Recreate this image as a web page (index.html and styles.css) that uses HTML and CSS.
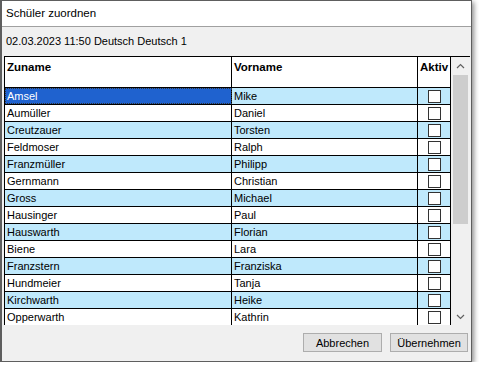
FILE: index.html
```html
<!DOCTYPE html>
<html lang="de">
<head>
  <meta charset="UTF-8">
  <title>Schüler zuordnen</title>
  <link rel="stylesheet" href="styles.css">
</head>
<body>
  <div class="window">
    <div class="titlebar">Schüler zuordnen</div>
    <div class="info">02.03.2023 11:50 Deutsch Deutsch 1</div>

    <div class="grid-wrap">
      <div class="grid">
        <div class="row head">
          <div class="cell">Zuname</div>
          <div class="cell">Vorname</div>
          <div class="cell">Aktiv</div>
        </div>
        <div class="row alt">
          <div class="cell selected">Amsel</div>
          <div class="cell">Mike</div>
          <div class="cell check"><span class="box"></span></div>
        </div>
        <div class="row">
          <div class="cell">Aumüller</div>
          <div class="cell">Daniel</div>
          <div class="cell check"><span class="box"></span></div>
        </div>
        <div class="row alt">
          <div class="cell">Creutzauer</div>
          <div class="cell">Torsten</div>
          <div class="cell check"><span class="box"></span></div>
        </div>
        <div class="row">
          <div class="cell">Feldmoser</div>
          <div class="cell">Ralph</div>
          <div class="cell check"><span class="box"></span></div>
        </div>
        <div class="row alt">
          <div class="cell">Franzmüller</div>
          <div class="cell">Philipp</div>
          <div class="cell check"><span class="box"></span></div>
        </div>
        <div class="row">
          <div class="cell">Gernmann</div>
          <div class="cell">Christian</div>
          <div class="cell check"><span class="box"></span></div>
        </div>
        <div class="row alt">
          <div class="cell">Gross</div>
          <div class="cell">Michael</div>
          <div class="cell check"><span class="box"></span></div>
        </div>
        <div class="row">
          <div class="cell">Hausinger</div>
          <div class="cell">Paul</div>
          <div class="cell check"><span class="box"></span></div>
        </div>
        <div class="row alt">
          <div class="cell">Hauswarth</div>
          <div class="cell">Florian</div>
          <div class="cell check"><span class="box"></span></div>
        </div>
        <div class="row">
          <div class="cell">Biene</div>
          <div class="cell">Lara</div>
          <div class="cell check"><span class="box"></span></div>
        </div>
        <div class="row alt">
          <div class="cell">Franzstern</div>
          <div class="cell">Franziska</div>
          <div class="cell check"><span class="box"></span></div>
        </div>
        <div class="row">
          <div class="cell">Hundmeier</div>
          <div class="cell">Tanja</div>
          <div class="cell check"><span class="box"></span></div>
        </div>
        <div class="row alt">
          <div class="cell">Kirchwarth</div>
          <div class="cell">Heike</div>
          <div class="cell check"><span class="box"></span></div>
        </div>
        <div class="row">
          <div class="cell">Opperwarth</div>
          <div class="cell">Kathrin</div>
          <div class="cell check"><span class="box"></span></div>
        </div>
      </div>

      <div class="scrollbar">
        <div class="arrow">
          <svg width="9" height="6" viewBox="0 0 9 6"><path d="M1 5 L4.5 1.5 L8 5" fill="none" stroke="#606060" stroke-width="1.2"/></svg>
        </div>
        <div class="track">
          <div class="thumb"></div>
        </div>
        <div class="arrow">
          <svg width="9" height="6" viewBox="0 0 9 6"><path d="M1 1 L4.5 4.5 L8 1" fill="none" stroke="#606060" stroke-width="1.2"/></svg>
        </div>
      </div>
    </div>

    <div class="footer">
      <button class="btn">Abbrechen</button>
      <button class="btn wide">Übernehmen</button>
    </div>
  </div>
</body>
</html>
```

FILE: styles.css
```css
body {
  margin: 0;
  background: #fff;
  font-family: "Liberation Sans", Arial, sans-serif;
  font-size: 11px;
  color: #000;
}
.window {
  box-sizing: border-box;
  width: 472px;
  height: 362px;
  border: 1px solid #5e5e5e;
  border-left-width: 2px;
  background: #f0f0f0;
  box-shadow: 2px 2px 5px rgba(0,0,0,0.45);
  display: flex;
  flex-direction: column;
}
.titlebar {
  height: 25px;
  line-height: 24px;
  padding-left: 4px;
  background: #fff;
  border-bottom: 1px solid #a0a0a0;
  font-size: 11.5px;
}
.info {
  height: 29px;
  line-height: 28px;
  padding-left: 4px;
  font-size: 11px;
}
.grid-wrap {
  display: flex;
  margin-left: 2px;
  margin-right: 1px;
  height: 268px;
  overflow: hidden;
  border-top: 1px solid #000;
  background: #fff;
}
.grid {
  border-left: 1px solid #000;
}
.row {
  display: grid;
  grid-template-columns: 227px 186px 33px;
  height: 16px;
  border-bottom: 1px solid #000;
  background: #fff;
}
.row.alt { background: #bfe9fc; }
.row.head {
  height: 30px;
  background: #fff;
  font-weight: bold;
  font-size: 11.5px;
}
.cell {
  border-right: 1px solid #000;
  padding-left: 2px;
  line-height: 16px;
  white-space: nowrap;
  overflow: hidden;
}
.row.head .cell {
  line-height: 14px;
  padding-top: 3px;
  padding-left: 2px;
}
.cell.selected {
  background: #1f62cf;
  color: #fff;
  outline: 1px dotted #333;
  outline-offset: -1px;
}
.cell.check {
  padding-left: 0;
  display: flex;
  align-items: center;
  justify-content: center;
}
.box {
  box-sizing: border-box;
  width: 13px;
  height: 13px;
  background: #fff;
  border: 1px solid #333;
}
.scrollbar {
  width: 19px;
  display: flex;
  flex-direction: column;
  background: #f0f0f0;
}
.arrow {
  height: 17px;
  display: flex;
  align-items: center;
  justify-content: center;
}
.track {
  flex: 1;
  padding: 1px 2px;
}
.thumb {
  height: 149px;
  background: #cdcdcd;
}
.footer {
  flex: 1;
  display: flex;
  justify-content: flex-end;
  align-items: flex-start;
  gap: 8px;
  padding: 8px 3px 0 0;
}
.btn {
  box-sizing: border-box;
  width: 79px;
  height: 19px;
  padding: 0;
  background: #e1e1e1;
  border: 1px solid #adadad;
  font-family: "Liberation Sans", Arial, sans-serif;
  font-size: 11px;
  color: #000;
}
.btn.wide { width: 78px; }
```
